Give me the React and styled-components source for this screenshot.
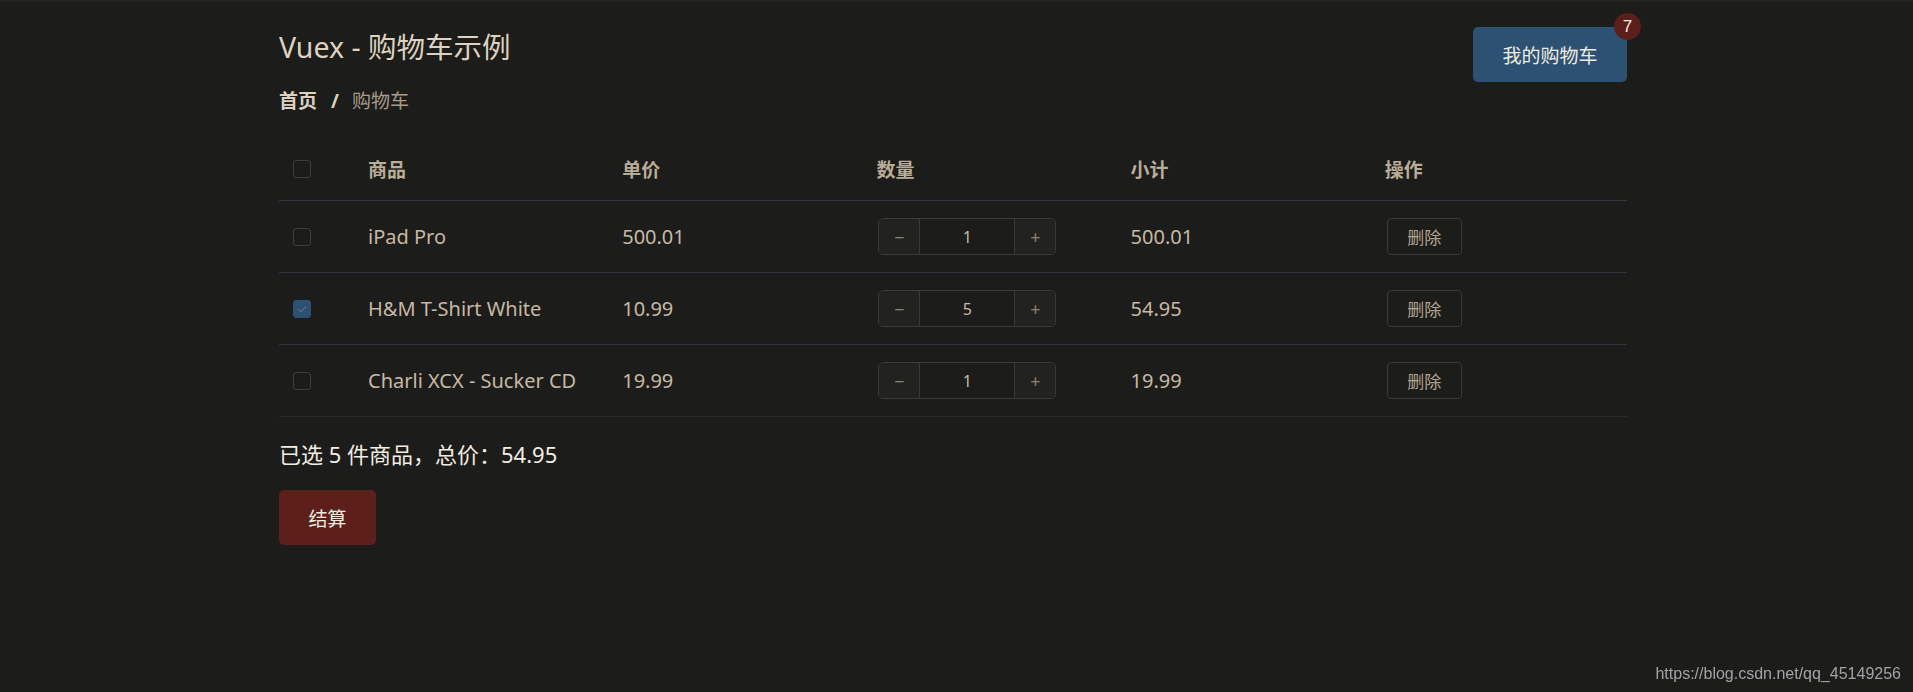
import React from 'react'
import styled, { createGlobalStyle } from 'styled-components'

const GlobalStyle = createGlobalStyle`
  html, body {
    margin: 0;
    padding: 0;
    background: #1c1c1b;
  }
  body {
    min-height: 692px;
    border-top: 2px solid #232323;
    box-sizing: border-box;
    font-family: 'Noto Sans', 'Noto Sans CJK SC', sans-serif;
    color: #cfc4b0;
  }
`

const items = [
  { name: 'iPad Pro', price: '500.01', qty: 1, total: '500.01', checked: false },
  { name: 'H&M T-Shirt White', price: '10.99', qty: 5, total: '54.95', checked: true },
  { name: 'Charli XCX - Sucker CD', price: '19.99', qty: 1, total: '19.99', checked: false },
]

const Check = ({ checked }) => (
  <CheckBox $checked={checked}>
    {checked && (
      <svg width="10" height="8" viewBox="0 0 10 8">
        <path d="M1 4 L4 6.5 L9 1.5" fill="none" stroke="#596a7d" strokeWidth="1.4" />
      </svg>
    )}
  </CheckBox>
)

export default function App() {
  return (
    <>
      <GlobalStyle />
      <Page>
        <Header>
          <div>
            <Title>Vuex - 购物车示例</Title>
            <Breadcrumb>
              <Crumb $strong>首页</Crumb>
              <Sep>/</Sep>
              <Crumb>购物车</Crumb>
            </Breadcrumb>
          </div>
          <CartButton>
            我的购物车
            <Badge>7</Badge>
          </CartButton>
        </Header>

        <Table>
          <HeadRow>
            <Cell $check>
              <Check />
            </Cell>
            <HeadCell>商品</HeadCell>
            <HeadCell>单价</HeadCell>
            <HeadCell>数量</HeadCell>
            <HeadCell>小计</HeadCell>
            <HeadCell>操作</HeadCell>
          </HeadRow>
          {items.map((it, i) => (
            <Row key={it.name} $last={i === items.length - 1}>
              <Cell $check>
                <Check checked={it.checked} />
              </Cell>
              <Cell>{it.name}</Cell>
              <Cell>{it.price}</Cell>
              <Cell>
                <Stepper>
                  <StepBtn>−</StepBtn>
                  <StepValue>{it.qty}</StepValue>
                  <StepBtn>+</StepBtn>
                </Stepper>
              </Cell>
              <Cell>{it.total}</Cell>
              <Cell>
                <DeleteButton>删除</DeleteButton>
              </Cell>
            </Row>
          ))}
        </Table>

        <Summary>已选 5 件商品，总价：54.95</Summary>
        <PayButton>结算</PayButton>
      </Page>
      <Watermark>https://blog.csdn.net/qq_45149256</Watermark>
    </>
  )
}

const Page = styled.div`
  width: 1348px;
  margin-left: 279px;
  padding-top: 25px;
`

const Header = styled.div`
  display: flex;
  justify-content: space-between;
  align-items: flex-start;
`

const Title = styled.h1`
  margin: 0;
  font-size: 28.5px;
  font-weight: 400;
  line-height: 40px;
  color: #ddd2bf;
`

const Breadcrumb = styled.div`
  display: flex;
  align-items: center;
  margin-top: 22px;
  font-size: 19px;
  line-height: 24px;
`

const Crumb = styled.span`
  font-weight: ${(p) => (p.$strong ? 700 : 400)};
  color: ${(p) => (p.$strong ? '#ddd2bf' : '#a89d89')};
`

const Sep = styled.span`
  margin: 0 13px 0 14px;
  font-weight: 700;
  color: #ddd2bf;
`

const CartButton = styled.div`
  position: relative;
  width: 154px;
  height: 55px;
  border-radius: 5px;
  background: #2d5172;
  color: #f1ece2;
  font-size: 19px;
  display: flex;
  align-items: center;
  justify-content: center;
`

const Badge = styled.span`
  position: absolute;
  top: -14px;
  right: -14px;
  width: 27px;
  height: 27px;
  border-radius: 50%;
  background: #5c1f1a;
  color: #f1ece2;
  font-size: 17px;
  display: flex;
  align-items: center;
  justify-content: center;
  font-family: 'Liberation Sans', sans-serif;
`

const Table = styled.div`
  margin-top: 28px;
`

const rowGrid = `
  display: grid;
  grid-template-columns: 77px repeat(5, 1fr);
  align-items: center;
`

const HeadRow = styled.div`
  ${rowGrid}
  height: 60px;
  padding-bottom: 3px;
  box-sizing: border-box;
  border-bottom: 1px solid #35353d;
`

const Row = styled.div`
  ${rowGrid}
  height: 71px;
  border-bottom: 1px solid ${(p) => (p.$last ? '#2a2a2a' : '#33333b')};
  font-size: 20px;
  color: #c6b9a3;
`

const Cell = styled.div`
  padding-left: ${(p) => (p.$check ? '14px' : '12px')};
  display: flex;
  align-items: center;
`

const HeadCell = styled(Cell)`
  font-weight: 700;
  font-size: 19px;
  color: #b9ad97;
`

const CheckBox = styled.span`
  box-sizing: border-box;
  width: 18px;
  height: 18px;
  border-radius: 3px;
  border: 1px solid ${(p) => (p.$checked ? '#2d5172' : '#3d3d3c')};
  background: ${(p) => (p.$checked ? '#2d5172' : 'transparent')};
  display: flex;
  align-items: center;
  justify-content: center;
`

const Stepper = styled.div`
  display: flex;
  width: 178px;
  height: 37px;
  box-sizing: border-box;
  border: 1px solid #3a3a37;
  border-radius: 5px;
  overflow: hidden;
  margin-left: 2px;
`

const StepBtn = styled.span`
  width: 40px;
  background: #22221f;
  color: #8c836f;
  font-size: 18px;
  display: flex;
  align-items: center;
  justify-content: center;
  &:first-child {
    border-right: 1px solid #3a3a37;
  }
  &:last-child {
    border-left: 1px solid #3a3a37;
  }
`

const StepValue = styled.span`
  flex: 1;
  display: flex;
  align-items: center;
  justify-content: center;
  font-size: 16px;
  color: #c6b9a3;
`

const DeleteButton = styled.span`
  box-sizing: border-box;
  width: 75px;
  height: 37px;
  margin-left: 2px;
  border: 1px solid #3a3a37;
  border-radius: 4px;
  font-size: 17px;
  color: #b0a48e;
  display: flex;
  align-items: center;
  justify-content: center;
`

const Summary = styled.div`
  margin-top: 23px;
  font-size: 22px;
  line-height: 28px;
  color: #f2ece2;
`

const PayButton = styled.div`
  margin-top: 22px;
  width: 97px;
  height: 55px;
  border-radius: 5px;
  background: #5c1f1a;
  color: #f1ece2;
  font-size: 19px;
  display: flex;
  align-items: center;
  justify-content: center;
`

const Watermark = styled.div`
  position: fixed;
  right: 12px;
  bottom: 9px;
  font-family: 'Liberation Sans', sans-serif;
  font-size: 16px;
  color: #a3a3a3;
`
